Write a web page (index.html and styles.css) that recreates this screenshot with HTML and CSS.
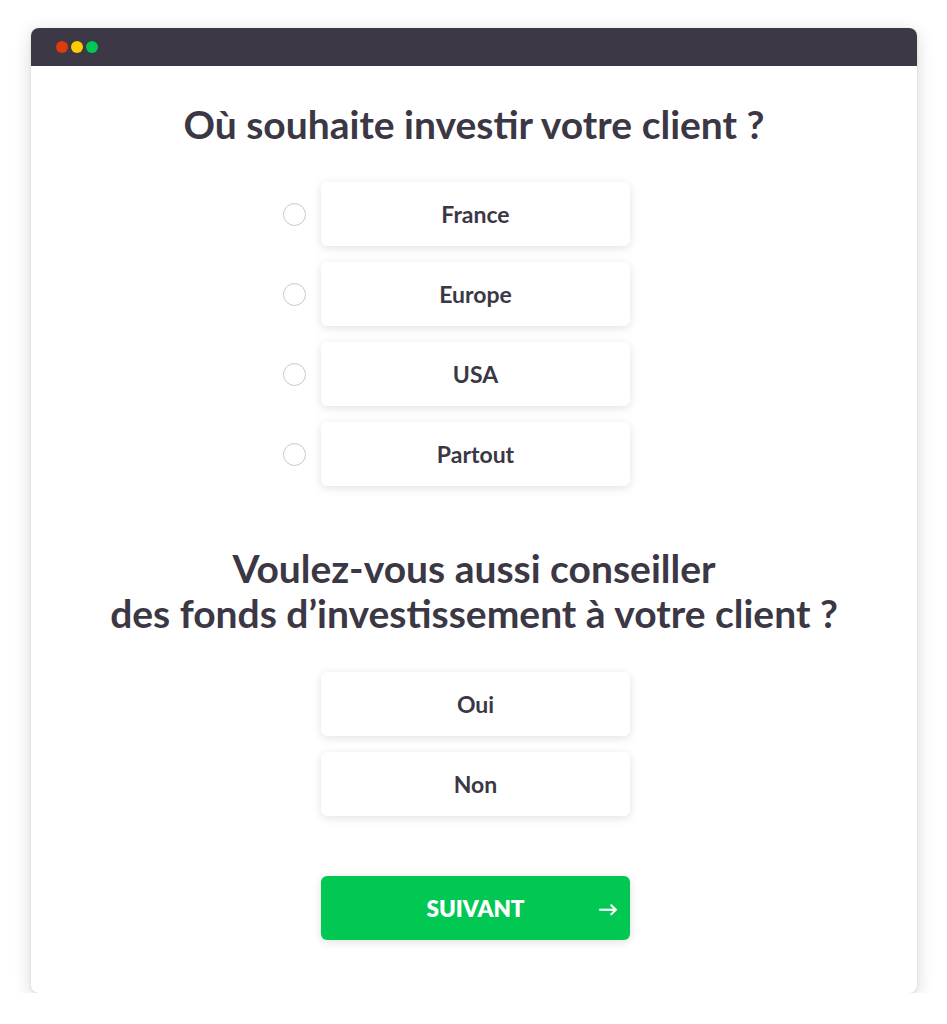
FILE: index.html
```html
<!DOCTYPE html>
<html lang="fr">
<head>
<meta charset="utf-8">
<title>Questionnaire</title>
<link rel="stylesheet" href="styles.css">
</head>
<body>
<div class="window">
  <div class="titlebar">
    <span class="dot red"></span>
    <span class="dot yellow"></span>
    <span class="dot green"></span>
  </div>
  <div class="content">
    <h1 class="q q1">Où souhaite investir votre client ?</h1>
    <div class="options">
      <label class="opt"><span class="radio"></span><span class="box">France</span></label>
      <label class="opt"><span class="radio"></span><span class="box">Europe</span></label>
      <label class="opt"><span class="radio"></span><span class="box">USA</span></label>
      <label class="opt"><span class="radio"></span><span class="box">Partout</span></label>
    </div>
    <h2 class="q q2">Voulez-vous aussi conseiller<br>des fonds d’investissement à votre client ?</h2>
    <div class="options">
      <div class="opt"><span class="box">Oui</span></div>
      <div class="opt"><span class="box">Non</span></div>
    </div>
    <button class="next"><span>SUIVANT</span><span class="arrow">→</span></button>
  </div>
</div>
</body>
</html>
```
FILE: styles.css
```css
html, body { margin: 0; padding: 0; background: #ffffff; }
body { font-family: Lato, "Open Sans", sans-serif; color: #3b3744; }
.window {
  margin: 28px 0 0 31px;
  width: 886px;
  height: 965px;
  border-radius: 8px;
  background: #fff;
  box-shadow: 0 4px 18px rgba(0,0,0,0.16), 0 1px 3px rgba(0,0,0,0.08);
  overflow: hidden;
}
.titlebar {
  height: 38px;
  background: #3d3846;
  display: flex;
  align-items: center;
  gap: 3px;
  padding-left: 24.5px;
}
.dot { width: 12px; height: 12px; border-radius: 50%; display: block; }
.red { background: #e03a0c; }
.yellow { background: #ffcc00; }
.green { background: #00c853; }
.content { display: flex; flex-direction: column; align-items: center; }
.q { margin: 0; font-weight: 700; text-align: center; color: #3b3744; }
.q1 { font-size: 39px; line-height: 44px; margin-top: 36px; }
.q2 { font-size: 39px; line-height: 45px; margin-top: 59.5px; }
.options { display: flex; flex-direction: column; gap: 16px; margin-top: 36px; }
.q2 + .options { margin-top: 36.5px; }
.opt { display: block; position: relative; width: 309px; margin-left: 3px; }
.radio {
  position: absolute; left: -38px; top: 21px;
  width: 21px; height: 21px; border: 1px solid #c9c9c9; border-radius: 50%; background: #fff;
}
.box {
  display: flex; align-items: center; justify-content: center;
  height: 64px; border-radius: 6px; background: #fff;
  box-shadow: 0 2px 10px rgba(0,0,0,0.12);
  font-size: 23px; font-weight: 700; color: #3b3744;
}
.next {
  margin-top: 60px; margin-left: 3px;
  width: 309px; height: 64px; border: 0; border-radius: 6px;
  background: #00c853; color: #fff;
  font-family: Lato, sans-serif; font-size: 22.5px; font-weight: 800;
  display: flex; align-items: center; justify-content: center; position: relative;
  box-shadow: 0 2px 10px rgba(0,0,0,0.12);
}
.arrow { position: absolute; right: 12px; font-size: 20px; font-weight: 700; }
```
